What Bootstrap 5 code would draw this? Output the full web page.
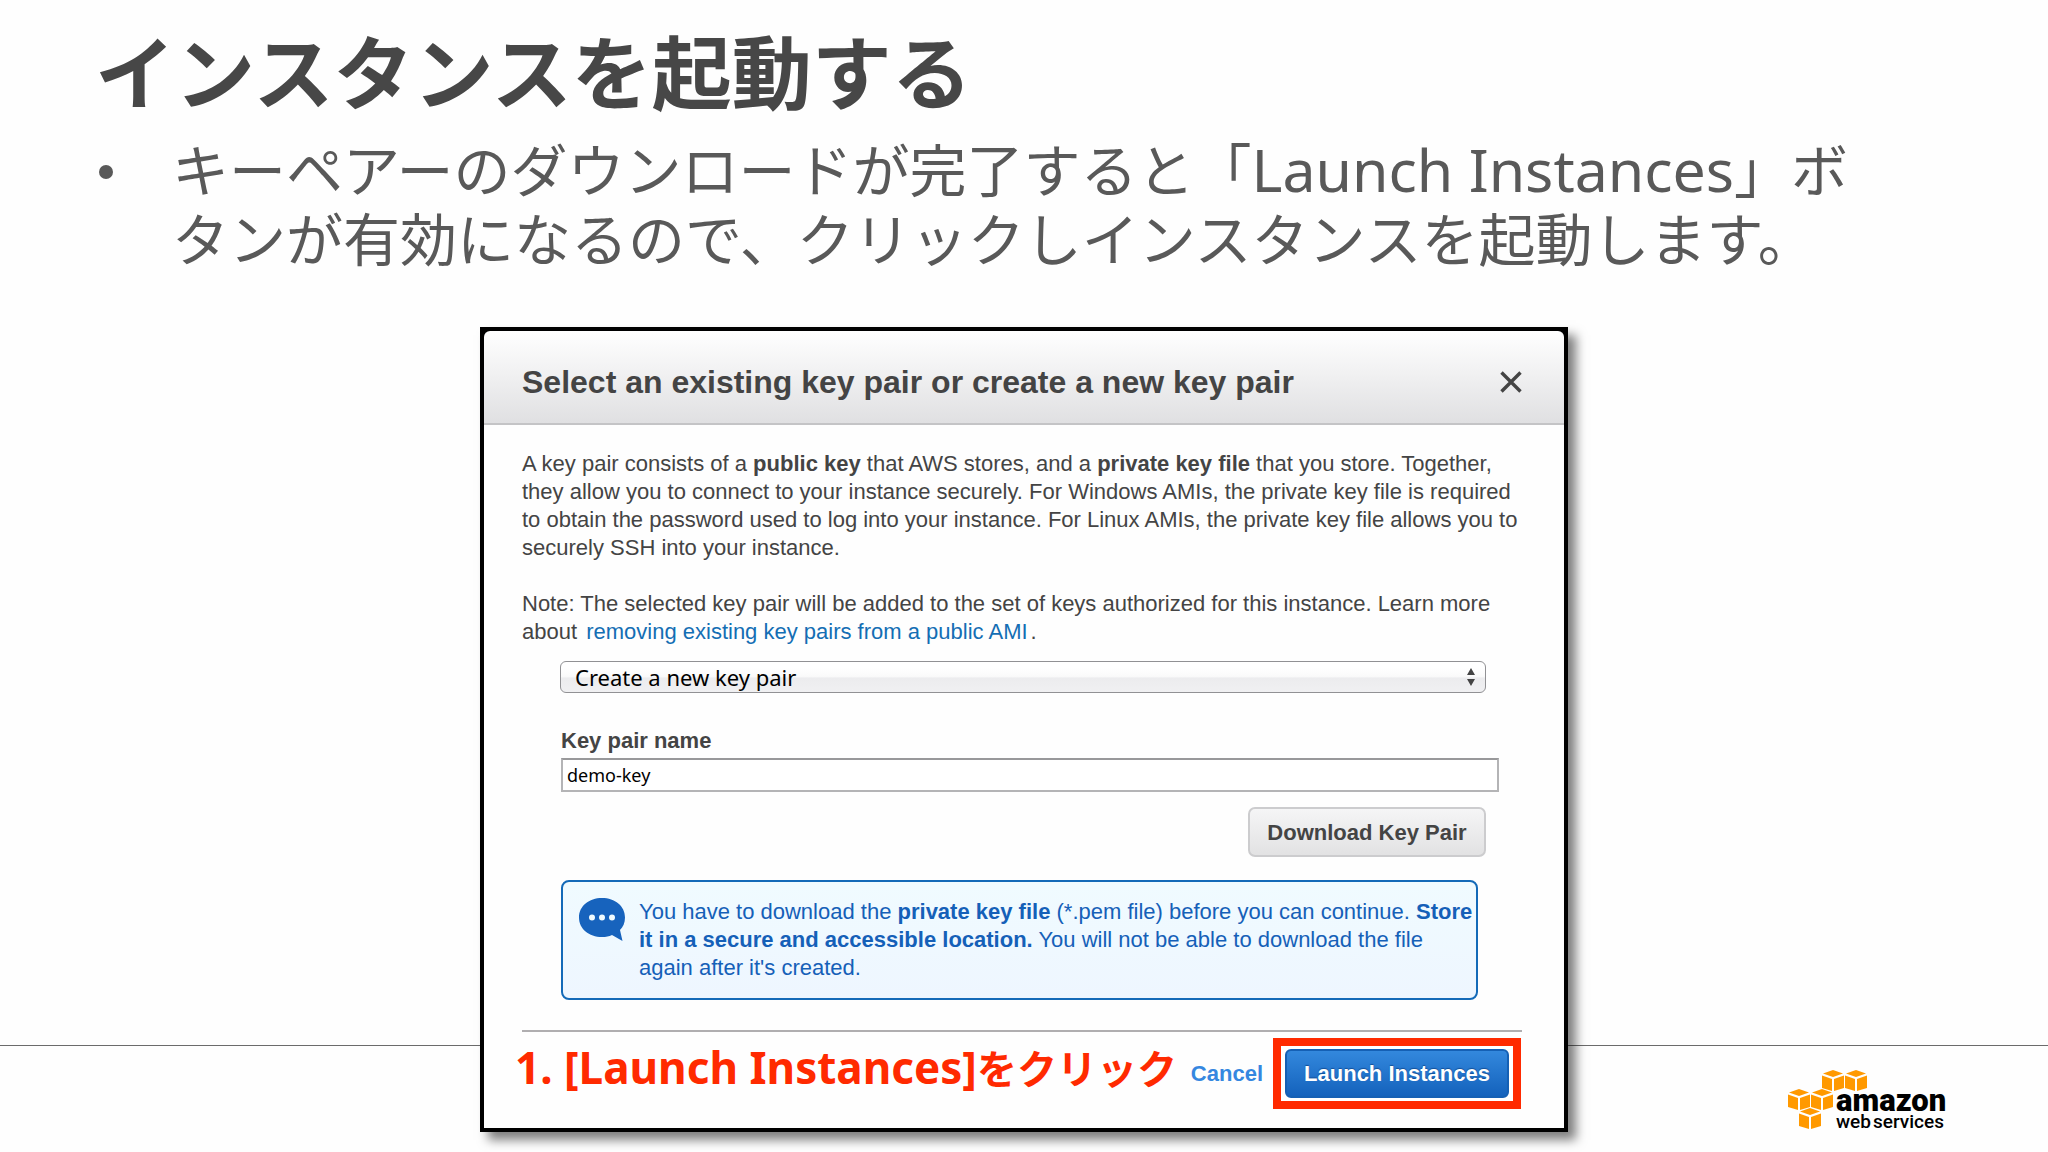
<!DOCTYPE html>
<html lang="ja">
<head>
<meta charset="utf-8">
<meta name="viewport" content="width=device-width, initial-scale=1">
<title>インスタンスを起動する</title>
<link href="https://cdn.jsdelivr.net/npm/bootstrap@5.3.0/dist/css/bootstrap.min.css" rel="stylesheet">
<style>
  body { background: #fefefe; color: #595959; font-family: "Noto Sans", "Noto Sans CJK JP", sans-serif; }
  .slide { padding: 20px 95px; }
  .slide-title { font-family: "Noto Sans CJK JP", sans-serif; font-size: 80px; line-height: 96px; font-weight: 700; color: #474747; }
  .slide-points { margin-top: 19px; margin-bottom: 53px; font-size: 57px; line-height: 69px; }
  .slide-points li::before { content: ""; flex: none; width: 14px; height: 14px; margin: 30px 59px 0 4px; border-radius: 50%; background: #595959; }
  .latin { font-size: 59px; }

  .slide-footer { height: 107px; border-top: 1px solid #6b6b6b; padding: 22px 102px 0 0; z-index: 0; }
  .aws-logo { width: 160px; height: 64px; }

  .dialog { max-width: 1088px; border: 4px solid #000; background: #000; box-shadow: 8px 8px 10px rgba(0,0,0,.5); font-family: "Liberation Sans", Arial, sans-serif; font-size: 22px; line-height: 28px; color: #444; z-index: 1; }
  .dialog-head { height: 94px; padding: 10px 40px 0 38px; border-bottom: 2px solid #c4c4c6; border-radius: 6px 6px 0 0; background: linear-gradient(#fff, #e0e0e2); }
  .dialog-head h2 { font-size: 32px; line-height: 40px; font-weight: 700; color: #444; }
  .close-x { width: 22px; height: 22px; margin-right: 2px; }
  .dialog-body { padding: 25px 42px 18px 38px; background: #fefefe; }
  .note { margin-top: 28px; }
  .note a { color: #146eb4; margin: 0 3px; }
  .key-form { margin: 15px 0 0 38px; }
  .key-select { height: 32px; width: auto; margin-right: 36px; padding: 0 40px 0 14px; border: 1px solid #919194; border-radius: 6px; color: #000; font-family: "Noto Sans", sans-serif; font-size: 22px; line-height: 30px;
    background: url("data:image/svg+xml,%3Csvg xmlns='http://www.w3.org/2000/svg' viewBox='0 0 8 18'%3E%3Cpath fill='%23444' d='M4 0l4 7H0zM4 18l4-7H0z'/%3E%3C/svg%3E") right 10px center / 8px 18px no-repeat, linear-gradient(#fff 20%, #fafafa 48%, #ececee 54%, #f0f0f2); }
  .key-label { margin: 34px 0 3px 1px; font-weight: 700; }
  .key-name { height: 34px; width: auto; margin: 0 23px 0 1px; padding: 0 4px; border: 2px solid #b4b4b6; border-top-color: #98989a; border-radius: 0; background: #fff; color: #000; font-family: "Noto Sans", sans-serif; font-size: 18px; line-height: 28px; }
  .btn-key { height: 50px; width: 238px; margin: 15px 36px 0 0; padding: 0; border: 2px solid #ccccce; border-radius: 7px; background: linear-gradient(#f5f5f6, #e2e2e3); color: #444; font-weight: 700; font-size: 22px; }
  .info { margin: 23px 44px 0 1px; padding: 16px 0 16px 16px; border: 2px solid #146ab8; border-radius: 8px; background: linear-gradient(#f0fbff, #eef6ff); color: #1560b8; }
  .info svg { width: 46px; height: 43px; margin-right: 14px; }
  .rule { height: 2px; margin-top: 30px; background: #b0aeb0; }
  .actions { margin: 5px 1px 0 -7px; }
  .callout { font-family: "Noto Sans", "Noto Sans CJK JP", sans-serif; font-size: 44px; line-height: 60px; font-weight: 700; color: #ff2a00; margin-bottom: 11px; }
  .callout-jp { font-size: 40px; }
  .btn-cancel { font-size: 22px; font-weight: 700; line-height: 28px; padding: 0; margin-right: 10px; color: #3587e0; }
  .marker { border: 8px solid #ff2a00; padding: 3px 4px; background: #fff; }
  .btn-launch { height: 49px; width: 224px; padding: 0; border: 2px solid #1560b4; border-radius: 6px; background: linear-gradient(#3388dd, #1462bc); color: #fff; font-weight: 700; font-size: 22px; text-shadow: 0 -1px 1px #124f98; }
</style>
<script src="https://cdn.jsdelivr.net/npm/bootstrap@5.3.0/dist/js/bootstrap.bundle.min.js"></script>
</head>
<body>
<div class="position-relative min-vh-100 overflow-hidden">
  <main class="slide pb-3">
    <h1 class="slide-title mb-0">インスタンスを起動する</h1>
    <ul class="slide-points list-unstyled">
      <li class="d-flex"><span>キーペアーのダウンロードが完了すると「<span class="latin">Launch Instances</span>」ボ<br>タンが有効になるので、クリックしインスタンスを起動します。</span></li>
    </ul>

    <section class="dialog position-relative mx-auto" aria-labelledby="dialog-title">
      <header class="dialog-head d-flex align-items-center justify-content-between">
        <h2 id="dialog-title" class="mb-0">Select an existing key pair or create a new key pair</h2>
        <button type="button" class="btn p-0 border-0 d-flex" aria-label="Close">
          <svg class="close-x" viewBox="0 0 22 22" stroke="#444" stroke-width="3.4" fill="none"><path d="M1.5 1.5l19 19M20.5 1.5l-19 19"/></svg>
        </button>
      </header>

      <div class="dialog-body">
        <p class="mb-0 text-nowrap">A key pair consists of a <b>public key</b> that AWS stores, and a <b>private key file</b> that you store. Together,<br>they allow you to connect to your instance securely. For Windows AMIs, the private key file is required<br>to obtain the password used to log into your instance. For Linux AMIs, the private key file allows you to<br>securely SSH into your instance.</p>
        <p class="note mb-0">Note: The selected key pair will be added to the set of keys authorized for this instance. Learn more<br>about <a href="#" class="text-decoration-none">removing existing key pairs from a public AMI</a>.</p>

        <form class="key-form d-flex flex-column">
          <select class="form-select key-select" aria-label="Key pair"><option>Create a new key pair</option></select>
          <label class="key-label" for="key-name">Key pair name</label>
          <input class="form-control key-name" id="key-name" type="text" value="demo-key">
          <button type="button" class="btn btn-key align-self-end">Download Key Pair</button>
          <div class="info d-flex">
            <svg class="flex-shrink-0" viewBox="0 0 46 43"><path fill="#1763bd" d="M23 0C36 0 46 8 46 19.500C46 25 44 29 41 32L43.500 43L33 37C30 38.500 27 39 23 39C10 39 0 31 0 19.500S10 0 23 0Z"/><g fill="#f0fbff"><circle cx="13" cy="19.500" r="3"/><circle cx="23" cy="19.500" r="3"/><circle cx="33" cy="19.500" r="3"/></g></svg>
            <div>You have to download the <b>private key file</b> (*.pem file) before you can continue. <b>Store<br>it in a secure and accessible location.</b> You will not be able to download the file<br>again after it's created.</div>
          </div>
        </form>

        <div class="rule"></div>
        <div class="actions d-flex align-items-center">
          <span class="callout text-nowrap me-auto">1. [Launch Instances]<span class="callout-jp">をクリック</span></span>
          <button type="button" class="btn btn-cancel border-0">Cancel</button>
          <div class="marker"><button type="button" class="btn btn-launch d-block">Launch Instances</button></div>
        </div>
      </div>
    </section>
  </main>

  <footer class="slide-footer position-absolute bottom-0 start-0 end-0 d-flex justify-content-end">
    <svg class="aws-logo" viewBox="0 0 160 64" role="img" aria-label="amazon web services">
      <defs>
        <g id="cube" fill="#f90">
          <path d="M1 3.500L11 0L21 3.500L11 7Z"/>
          <path d="M0 5.500L10 9V21L0 18Z"/>
          <path d="M22 5.500L12 9V21L22 18Z"/>
        </g>
      </defs>
      <use href="#cube" x="36" y="2"/>
      <use href="#cube" x="59" y="2"/>
      <use href="#cube" x="2" y="21"/>
      <use href="#cube" x="25" y="21"/>
      <use href="#cube" x="13" y="40"/>
      <g font-family="Roboto, sans-serif" fill="#000">
        <text x="50" y="43" font-size="31" font-weight="900">amazon</text>
        <text x="50" y="60" font-size="19" font-weight="500">web</text>
        <text x="87" y="60" font-size="19" font-weight="500">services</text>
      </g>
    </svg>
  </footer>
</div>
</body>
</html>
